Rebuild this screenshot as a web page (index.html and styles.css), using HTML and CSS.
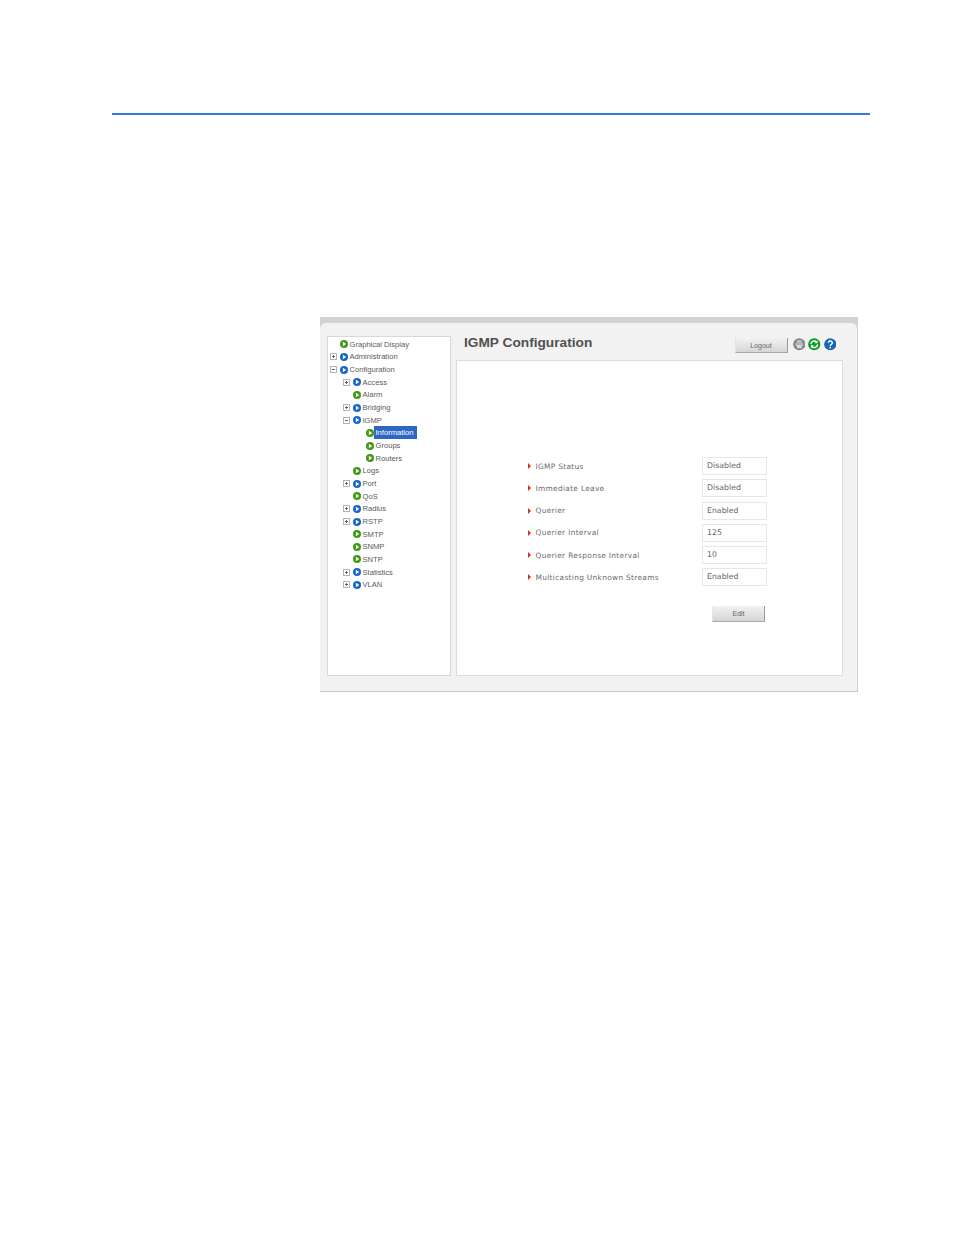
FILE: index.html
```html
<!DOCTYPE html>
<html lang="en">
<head>
<meta charset="utf-8">
<title>IGMP Configuration</title>
<link rel="stylesheet" href="styles.css">
</head>
<body>
<svg class="defs" width="0" height="0" aria-hidden="true">
  <symbol id="node" viewBox="0 0 8 8"><circle cx="4" cy="4" r="4" fill="currentColor"/><path d="M2.9 1.7 6.2 4 2.9 6.3Z" fill="#fff"/></symbol>
</svg>
<div class="rule"></div>
<section class="shot">
  <div class="band"></div>
  <div class="body">
    <nav class="tree">
      <div class="row l0"><span class="exp none"></span><svg class="ico go"><use href="#node"/></svg><span>Graphical Display</span></div>
      <div class="row l0"><span class="exp plus"></span><svg class="ico fold"><use href="#node"/></svg><span>Administration</span></div>
      <div class="row l0"><span class="exp minus"></span><svg class="ico fold"><use href="#node"/></svg><span>Configuration</span></div>
      <div class="row l1"><span class="exp plus"></span><svg class="ico fold"><use href="#node"/></svg><span>Access</span></div>
      <div class="row l1"><span class="exp none"></span><svg class="ico go"><use href="#node"/></svg><span>Alarm</span></div>
      <div class="row l1"><span class="exp plus"></span><svg class="ico fold"><use href="#node"/></svg><span>Bridging</span></div>
      <div class="row l1"><span class="exp minus"></span><svg class="ico fold"><use href="#node"/></svg><span>IGMP</span></div>
      <div class="row l2"><span class="exp none"></span><svg class="ico go"><use href="#node"/></svg><span class="sel">Information</span></div>
      <div class="row l2"><span class="exp none"></span><svg class="ico go"><use href="#node"/></svg><span>Groups</span></div>
      <div class="row l2"><span class="exp none"></span><svg class="ico go"><use href="#node"/></svg><span>Routers</span></div>
      <div class="row l1"><span class="exp none"></span><svg class="ico go"><use href="#node"/></svg><span>Logs</span></div>
      <div class="row l1"><span class="exp plus"></span><svg class="ico fold"><use href="#node"/></svg><span>Port</span></div>
      <div class="row l1"><span class="exp none"></span><svg class="ico go"><use href="#node"/></svg><span>QoS</span></div>
      <div class="row l1"><span class="exp plus"></span><svg class="ico fold"><use href="#node"/></svg><span>Radius</span></div>
      <div class="row l1"><span class="exp plus"></span><svg class="ico fold"><use href="#node"/></svg><span>RSTP</span></div>
      <div class="row l1"><span class="exp none"></span><svg class="ico go"><use href="#node"/></svg><span>SMTP</span></div>
      <div class="row l1"><span class="exp none"></span><svg class="ico go"><use href="#node"/></svg><span>SNMP</span></div>
      <div class="row l1"><span class="exp none"></span><svg class="ico go"><use href="#node"/></svg><span>SNTP</span></div>
      <div class="row l1"><span class="exp plus"></span><svg class="ico fold"><use href="#node"/></svg><span>Statistics</span></div>
      <div class="row l1"><span class="exp plus"></span><svg class="ico fold"><use href="#node"/></svg><span>VLAN</span></div>
    </nav>
    <main class="main">
      <header class="head">
        <h1 class="title">IGMP Configuration</h1>
        <div class="tools">
          <button class="btn logout">Logout</button>
          <svg class="tool" viewBox="0 0 13 13"><circle cx="6.5" cy="6.5" r="6.3" fill="#7f8488"/><rect x="4" y="2.4" width="5" height="2.4" fill="#c9cbcc"/><rect x="2.4" y="4.8" width="8.2" height="3.6" rx=".6" fill="#b4b7b9"/><rect x="4" y="7.4" width="5" height="3.2" fill="#dcdcdc"/></svg>
          <svg class="tool" viewBox="0 0 13 13"><circle cx="6.5" cy="6.5" r="6.3" fill="#0f9a2c"/><path d="M3 6.4A3.5 3.5 0 0 1 9 4.2M10 6.6A3.5 3.5 0 0 1 4 8.8" fill="none" stroke="#fff" stroke-width="1.4"/><path d="M9.9 2.3V5.4H6.9ZM3.1 10.7V7.6H6.1Z" fill="#fff"/></svg>
          <svg class="tool" viewBox="0 0 13 13"><circle cx="6.5" cy="6.5" r="6.3" fill="#1569b4"/><path d="M4.5 5A2.1 1.9 0 1 1 7.6 6.7C6.8 7.2 6.5 7.5 6.5 8.4" fill="none" stroke="#fff" stroke-width="1.5"/><rect x="5.7" y="9.2" width="1.6" height="1.6" fill="#fff"/></svg>
        </div>
      </header>
      <div class="content">
        <div class="fields">
          <div class="label">IGMP Status</div><div class="value">Disabled</div>
          <div class="label">Immediate Leave</div><div class="value">Disabled</div>
          <div class="label">Querier</div><div class="value">Enabled</div>
          <div class="label">Querier Interval</div><div class="value">125</div>
          <div class="label">Querier Response Interval</div><div class="value">10</div>
          <div class="label">Multicasting Unknown Streams</div><div class="value">Enabled</div>
        </div>
        <div class="actions"><button class="btn edit">Edit</button></div>
      </div>
    </main>
  </div>
</section>
</body>
</html>
```

FILE: styles.css
```css
html, body {
  margin: 0;
  background: #fff;
}
body {
  height: 1235px;
  overflow: hidden;
  font-family: "Liberation Sans", Arial, sans-serif;
  color: #555;
}
.defs {
  position: absolute;
}
.rule {
  height: 2px;
  margin: 113px 84px 0 112px;
  background: #3078ea;
}
.shot {
  width: 538px;
  height: 375px;
  margin: 202px 0 0 320px;
  background: #d2d2d2;
  display: flex;
  flex-direction: column;
}
.band {
  height: 6px;
  flex: none;
}
.body {
  flex: 1;
  display: flex;
  gap: 5px;
  padding: 13px 15px 15px 7px;
  background: #f2f2f2;
  border-radius: 6px 6px 0 0;
  border-right: 1px solid #d0d0d0;
  border-bottom: 1px solid #c8c8c8;
  box-sizing: border-box;
  min-height: 0;
}
.tree {
  width: 124px;
  flex: none;
  box-sizing: border-box;
  background: #fff;
  border: 1px solid #d8d8d8;
  padding-top: 1px;
}
.row {
  display: flex;
  align-items: center;
  height: 12.66px;
  font-size: 7.6px;
  color: #5a5a5a;
  white-space: nowrap;
}
.l0 { padding-left: 2px; }
.l1 { padding-left: 15px; }
.l2 { padding-left: 28px; }
.exp {
  width: 7px;
  height: 7px;
  box-sizing: border-box;
  margin-right: 3px;
  flex: none;
  border: 1px solid #b4b4b4;
  background-repeat: no-repeat;
  background-position: center;
}
.exp.none { border-color: transparent; }
.exp.minus { background-image: linear-gradient(#666, #666); background-size: 3px 1px; }
.exp.plus {
  background-image: linear-gradient(#666, #666), linear-gradient(#666, #666);
  background-size: 3px 1px, 1px 3px;
}
.ico {
  width: 8px;
  height: 8px;
  flex: none;
  margin-right: 1.5px;
}
.go { color: #3f9a12; }
.fold { color: #1668c8; }
.sel {
  background: #2e66c4;
  color: #fff;
  padding: 0 3px 0 2px;
  margin-left: -2px;
  line-height: 13px;
}
.main {
  width: 387px;
  display: flex;
  flex-direction: column;
}
.head {
  height: 24px;
  flex: none;
  display: flex;
  justify-content: space-between;
  padding: 0 7px 0 8px;
}
.title {
  margin: -2.5px 0 0;
  font-size: 13.7px;
  line-height: 18px;
  font-weight: bold;
  color: #505050;
}
.tools {
  display: flex;
  align-items: flex-start;
  gap: 3px;
  padding-top: 2px;
}
.tool {
  width: 12.5px;
  height: 12.5px;
}
.btn {
  display: block;
  padding: 0;
  box-sizing: border-box;
  font-family: "Liberation Sans", Arial, sans-serif;
  font-size: 7px;
  font-weight: 400;
  color: #666;
  background: linear-gradient(#f2f2f2, #d6d6d6);
  border: 0;
  border-left: 1px solid #e4e4e4;
  border-right: 1px solid #9a9a9a;
  border-bottom: 1px solid #a8a8a8;
}
.logout {
  width: 53px;
  height: 15px;
  margin-right: 2px;
}
.content {
  flex: 1;
  background: #fff;
  border: 1px solid #dcdcdc;
  padding: 96px 75px 0 70.5px;
}
.fields {
  display: grid;
  grid-template-columns: 174.5px 65px;
  grid-auto-rows: 22.3px;
}
.label {
  display: flex;
  align-items: center;
  height: 18px;
  font-family: "DejaVu Sans", sans-serif;
  font-size: 7.4px;
  letter-spacing: .32px;
  color: #6a6a6a;
  white-space: nowrap;
}
.label::before {
  content: "";
  width: 0;
  height: 0;
  margin-right: 5px;
  border-left: 3px solid #d8301c;
  border-top: 3px solid transparent;
  border-bottom: 3px solid transparent;
}
.value {
  height: 18px;
  box-sizing: border-box;
  border: 1px solid #e6e6e6;
  padding: 1px 0 0 4px;
  font-family: "DejaVu Sans", sans-serif;
  font-size: 7.8px;
  line-height: 13px;
  color: #666;
}
.actions {
  display: flex;
  justify-content: flex-end;
  padding: 15px 2px 0 0;
}
.edit {
  width: 53px;
  height: 16px;
}
```
